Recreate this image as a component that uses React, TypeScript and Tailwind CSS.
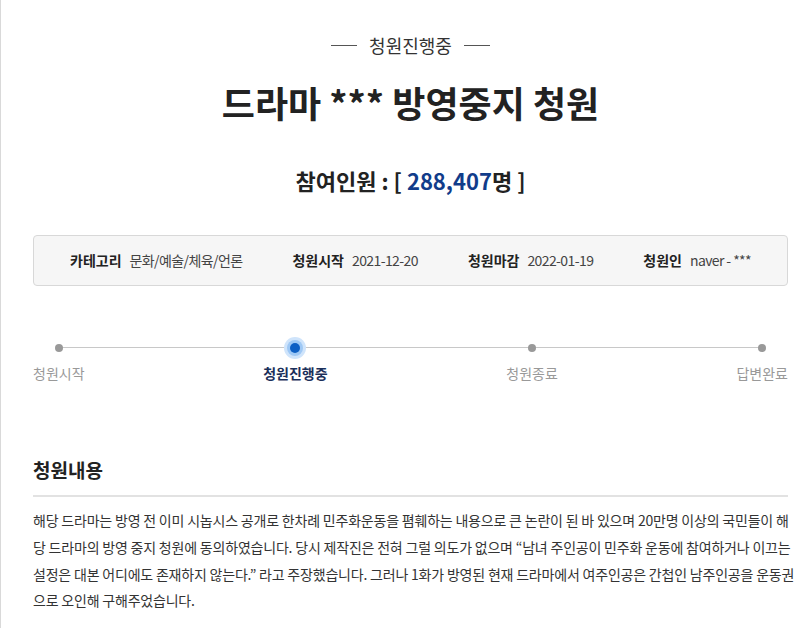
const FONT = "font-['Noto_Sans_CJK_KR','Noto_Sans',sans-serif]";

const steps = [
  { label: "청원시작", active: false },
  { label: "청원진행중", active: true },
  { label: "청원종료", active: false },
  { label: "답변완료", active: false },
];

const info = [
  { label: "카테고리", value: "문화/예술/체육/언론" },
  { label: "청원시작", value: "2021-12-20" },
  { label: "청원마감", value: "2022-01-19" },
  { label: "청원인", value: "naver - ***" },
];

const lines = [
  "해당 드라마는 방영 전 이미 시놉시스 공개로 한차례 민주화운동을 폄훼하는 내용으로 큰 논란이 된 바 있으며 20만명 이상의 국민들이 해",
  "당 드라마의 방영 중지 청원에 동의하였습니다. 당시 제작진은 전혀 그럴 의도가 없으며 “남녀 주인공이 민주화 운동에 참여하거나 이끄는",
  "설정은 대본 어디에도 존재하지 않는다.” 라고 주장했습니다. 그러나 1화가 방영된 현재 드라마에서 여주인공은 간첩인 남주인공을 운동권",
  "으로 오인해 구해주었습니다.",
];

export default function App() {
  return (
    <div className={`${FONT} h-[628px] w-[800px] overflow-hidden border-l border-[#d9d9d9] bg-white text-[#333]`}>
      <div className="px-[32px] pr-[12px]">
        {/* status */}
        <div className="flex items-center justify-center gap-[12px] pt-[31px] text-[18px] leading-[28px] text-[#333]">
          <span className="h-px w-[26px] bg-[#555]" />
          <span>청원진행중</span>
          <span className="h-px w-[26px] bg-[#555]" />
        </div>

        {/* title */}
        <h1 className="mt-[20px] text-center text-[36px] font-bold leading-[46px] text-[#222]">
          드라마 *** 방영중지 청원
        </h1>

        {/* participants */}
        <p className="mt-[40px] text-center text-[22px] font-bold leading-[30px] text-[#222]">
          참여인원 : [ <span className="text-[#113c8a]">288,407</span>명 ]
        </p>

        {/* info box */}
        <div className="mt-[40px] flex h-[51px] items-center justify-center gap-[50px] rounded-[4px] border border-[#d8d8d8] bg-[#f6f6f6] text-[14px]">
          {info.map((it) => (
            <div key={it.label} className="flex items-center gap-[8px]">
              <span className="font-bold text-[#222]">{it.label}</span>
              <span className="tracking-[-0.6px] text-[#444]">{it.value}</span>
            </div>
          ))}
        </div>

        {/* progress */}
        <div className="relative mt-[51px]">
          <div className="absolute left-[25px] right-[25px] top-[10px] h-px bg-[#c8c8c8]" />
          <div className="relative flex justify-between">
            {steps.map((s) => (
              <div key={s.label} className="flex flex-col items-center">
                <div className="flex h-[22px] w-[22px] items-center justify-center">
                  {s.active ? (
                    <span className="flex h-[22px] w-[22px] items-center justify-center rounded-full bg-[#cfe4fb]">
                      <span className="h-[10px] w-[10px] rounded-full bg-[#0d5fc4] ring-[3px] ring-[#9ec8f5]" />
                    </span>
                  ) : (
                    <span className="h-[8px] w-[8px] rounded-full bg-[#999]" />
                  )}
                </div>
                <span
                  className={
                    s.active
                      ? "mt-[4px] text-[14px] font-bold leading-[20px] text-[#1b2f5a]"
                      : "mt-[4px] text-[14px] leading-[20px] text-[#999]"
                  }
                >
                  {s.label}
                </span>
              </div>
            ))}
          </div>
        </div>

        {/* content */}
        <h2 className="mt-[73px] text-[19px] font-bold leading-[28px] text-[#222]">청원내용</h2>
        <div className="mt-[11px] h-[2px] bg-[#e2e2e2]" />
        <div className="mt-[10px] text-[14px] leading-[26.8px] tracking-[-0.2px] text-[#333]">
          {lines.map((l) => (
            <p key={l} className="whitespace-nowrap">
              {l}
            </p>
          ))}
        </div>
      </div>
    </div>
  );
}
